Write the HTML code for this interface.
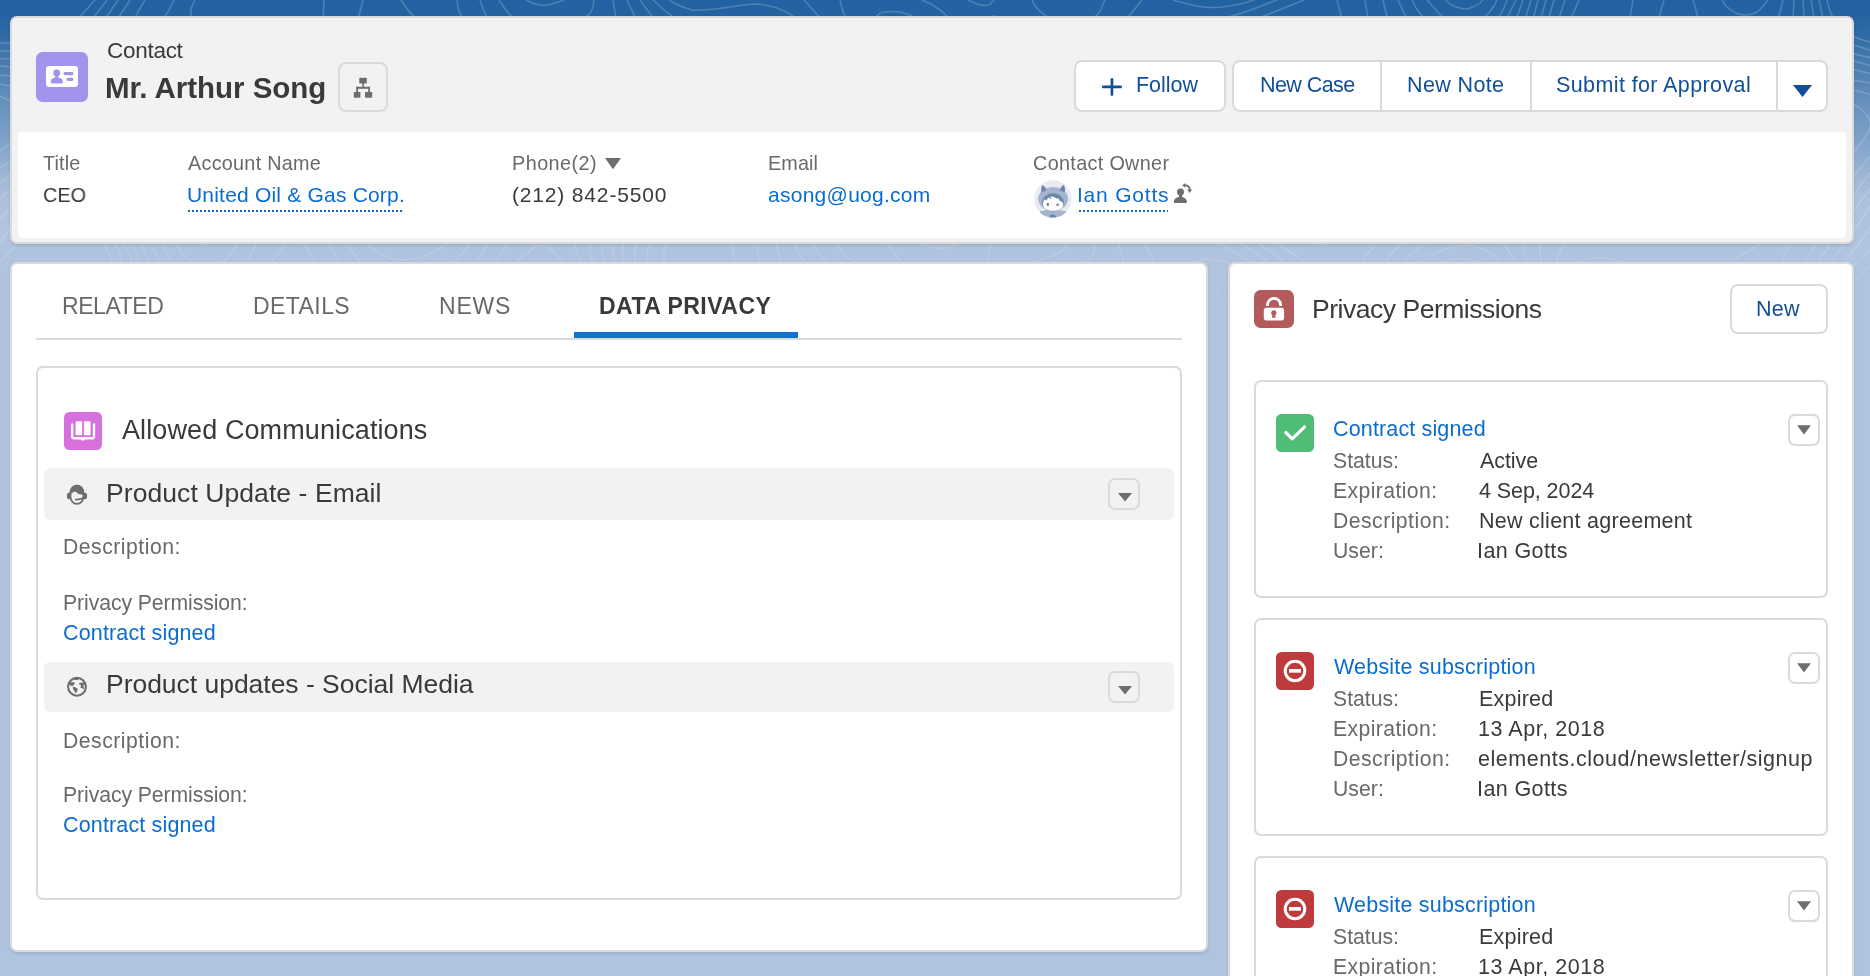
<!DOCTYPE html>
<html><head><meta charset="utf-8"><title>Contact - Mr. Arthur Song</title>
<style>
html,body{margin:0;padding:0}
body{width:1870px;height:976px;overflow:hidden;position:relative;font-family:"Liberation Sans",sans-serif;
background:linear-gradient(180deg,#2362a2 0px,#2463a2 15px,#2f6ba6 35px,#3d74aa 50px,#4679ad 60px,#6490bc 100px,#86a7cd 150px,#a2b8d7 180px,#adc1dd 200px,#b0c4df 225px,#b0c4df 976px)}
.t{position:absolute;white-space:nowrap;line-height:1;will-change:transform}
</style></head><body>
<svg style="position:absolute;left:0;top:0" width="1870" height="330" viewBox="0 0 1870 330"><defs><linearGradient id="tf" x1="0" y1="0" x2="0" y2="1"><stop offset="0" stop-color="#fff" stop-opacity="1"/><stop offset="0.75" stop-color="#fff" stop-opacity="0.8"/><stop offset="1" stop-color="#fff" stop-opacity="0"/></linearGradient><mask id="tm"><rect width="1870" height="330" fill="url(#tf)"/></mask></defs><path d="M1445 0L1450 4Q1455 7 1460 8Q1464 10 1470 8Q1476 6 1480 3L1483 0M1485 333L1488 326Q1490 318 1489 310Q1488 303 1483 297Q1478 291 1471 289Q1464 286 1456 288Q1449 290 1444 297Q1438 303 1437 310Q1436 318 1439 326L1442 333M1427 0L1435 9Q1443 18 1448 21Q1454 24 1459 25Q1464 26 1468 26Q1473 25 1478 23Q1482 20 1486 16Q1491 11 1494 6L1497 0M704 291L709 290Q715 288 720 285Q725 282 729 274Q734 267 734 260Q734 252 731 232Q729 213 727 208Q726 204 725 203Q723 202 717 204Q711 207 694 218Q678 230 673 235Q668 240 666 246Q663 252 664 260Q666 267 670 274Q675 280 681 285Q687 289 695 290L704 291M1499 333L1500 322Q1502 312 1499 302Q1496 291 1489 284Q1482 277 1473 274Q1464 271 1454 274Q1443 277 1435 284Q1428 291 1424 302Q1421 312 1423 322L1425 333M1234 300L1236 297Q1239 294 1238 290Q1236 287 1232 285Q1227 283 1223 284Q1219 285 1218 288Q1217 291 1218 294Q1220 297 1223 299Q1227 301 1230 300L1234 300M1412 0L1416 8Q1421 15 1427 22Q1434 29 1443 34Q1452 40 1460 41Q1467 43 1473 41Q1479 39 1484 36Q1488 32 1494 24Q1500 16 1504 8L1507 0M924 87L928 83Q933 79 936 71Q938 63 939 56Q939 48 936 40Q933 33 929 28Q924 22 916 18Q909 14 900 12Q891 11 885 12Q879 13 877 16Q874 18 874 22Q873 27 878 38Q882 49 894 64Q906 79 910 82Q915 85 919 86L924 87M716 306L733 299Q750 291 753 288Q757 285 759 280Q761 276 758 250Q755 225 758 196Q762 168 759 160Q757 153 752 150Q747 147 741 148Q735 150 729 155Q723 160 708 178Q693 196 674 214Q656 231 652 240Q647 249 647 255Q648 261 650 267Q652 273 656 279Q660 285 666 291Q672 297 682 302Q693 307 705 307L716 306M1169 216L1172 213Q1174 210 1177 205Q1179 199 1181 185Q1182 171 1179 162Q1176 152 1173 150Q1170 147 1166 146Q1161 145 1156 147Q1152 150 1148 155Q1143 160 1140 167Q1137 174 1137 182Q1136 189 1138 196Q1140 202 1144 208Q1149 213 1155 215Q1161 218 1165 217L1169 216M936 180L936 176Q936 171 933 169Q930 168 929 172Q928 177 929 179Q930 181 933 180L936 180M1242 318L1248 315Q1254 311 1258 306Q1262 300 1261 294Q1261 288 1258 284Q1256 279 1249 274Q1242 268 1233 265Q1224 261 1215 260Q1206 258 1200 260Q1194 262 1191 266Q1188 270 1188 276Q1187 282 1188 288Q1189 294 1193 300Q1197 306 1201 310Q1206 314 1212 317Q1218 319 1224 320Q1230 320 1236 319L1242 318M1508 333L1510 320Q1511 306 1507 294Q1503 282 1499 276Q1494 271 1490 267Q1485 264 1474 261Q1464 258 1456 259Q1449 260 1443 263Q1437 265 1428 274Q1418 282 1415 288Q1412 294 1410 300Q1409 306 1409 314Q1408 321 1410 327L1411 333M840 0L842 8Q844 15 849 26Q854 36 873 66Q893 96 897 105Q901 114 903 123Q904 132 902 152Q900 171 902 180Q904 189 911 198Q918 207 922 210Q927 212 932 213Q936 213 940 213Q945 212 950 208Q954 205 957 200Q960 195 961 190Q962 186 962 178Q961 171 956 153Q951 135 950 126Q949 117 954 81Q959 45 958 38Q956 30 953 24Q949 18 944 13Q939 9 931 4L922 0M1032 0L1034 4Q1037 9 1042 13Q1047 17 1053 20Q1059 23 1066 24Q1074 25 1080 24Q1086 22 1090 20Q1094 18 1098 14Q1102 9 1103 4L1105 0M1398 0L1402 9Q1406 18 1412 26Q1419 35 1446 55Q1473 76 1476 74Q1479 71 1488 56Q1497 40 1506 20L1516 0M1518 165L1522 163Q1527 161 1530 157Q1533 153 1534 148Q1534 144 1532 140Q1531 135 1520 122Q1509 109 1492 95Q1476 82 1473 87Q1470 91 1467 101Q1464 111 1464 117Q1464 123 1467 130Q1469 138 1474 145Q1479 152 1485 157Q1491 162 1497 164Q1503 166 1510 165L1518 165M708 321L746 313Q783 304 788 301Q794 297 793 291Q793 285 785 268Q778 252 775 242Q773 231 773 222Q773 213 776 192Q779 171 779 160Q778 150 774 141Q770 132 763 128Q756 123 748 124Q741 126 734 131Q726 137 705 163Q684 189 664 208Q644 228 639 237Q635 246 635 252Q634 258 636 264Q638 270 642 278Q647 285 653 293Q660 301 666 306Q672 311 678 315Q684 318 696 320L708 321M1242 330L1251 326Q1260 322 1266 317Q1271 312 1274 306Q1276 300 1275 292Q1274 285 1271 279Q1267 273 1262 269Q1257 265 1236 253Q1215 242 1209 237Q1202 231 1199 224Q1196 216 1196 192Q1195 168 1192 156Q1189 144 1185 139Q1182 133 1178 130Q1173 126 1168 125Q1164 124 1160 125Q1155 126 1147 133Q1138 141 1131 154Q1124 168 1121 180Q1119 192 1122 202Q1124 213 1138 234Q1153 255 1160 276Q1167 297 1174 306Q1180 315 1187 320Q1194 325 1202 328Q1209 331 1216 332Q1224 333 1233 331L1242 330M1517 333L1518 318Q1520 303 1515 290Q1511 276 1507 270Q1503 264 1497 258Q1491 252 1485 250Q1479 247 1473 246Q1467 245 1460 246Q1452 247 1443 250Q1434 253 1428 257Q1422 261 1416 267Q1410 273 1406 279Q1402 285 1400 292Q1397 300 1396 308Q1395 315 1396 324L1397 333M1105 333L1103 327Q1102 321 1098 317Q1095 313 1089 310Q1083 308 1076 307Q1068 306 1060 307Q1053 308 1047 311Q1041 315 1037 319Q1033 324 1032 328L1031 333M914 333L901 330Q888 326 873 325Q858 323 850 325Q843 326 841 330L840 333M804 0L814 11Q825 22 846 53Q867 85 873 95Q878 105 881 117Q884 129 884 152Q883 174 887 186Q891 198 895 204Q900 211 906 216Q912 222 918 225Q924 228 930 230Q936 231 942 230Q948 229 954 226Q960 222 964 217Q969 212 972 205Q975 198 975 188Q976 177 971 154Q966 132 965 120Q965 108 970 83Q975 58 980 43Q984 28 987 22Q990 16 994 16Q999 17 1026 28Q1053 39 1062 41Q1071 43 1080 43Q1089 43 1096 41Q1104 40 1110 36Q1116 32 1129 16L1142 0M994 0L990 4Q987 7 977 4L968 0M1173 0L1184 3Q1194 6 1203 7Q1212 8 1222 7Q1233 6 1244 3L1254 0M1383 0L1385 9Q1387 18 1391 26Q1395 33 1413 56Q1431 78 1433 84Q1435 90 1437 106Q1440 123 1445 135Q1451 147 1465 164Q1479 181 1485 185Q1491 188 1497 189Q1503 191 1514 189Q1524 187 1536 182Q1548 177 1554 172Q1560 168 1562 164Q1564 159 1562 152Q1559 144 1537 118Q1515 93 1510 82Q1504 72 1505 62Q1505 51 1514 26L1523 0M961 333L944 327Q928 321 889 310Q851 300 841 295Q831 290 822 281Q812 273 804 261Q796 249 792 238Q789 228 789 219Q789 210 792 188Q796 165 794 150Q792 135 789 129Q786 122 782 117Q777 111 772 109Q768 106 762 105Q756 104 748 106Q741 108 734 113Q726 119 703 149Q680 180 657 202Q633 225 628 234Q624 243 623 249Q623 255 624 261Q626 267 634 280Q642 294 656 308Q669 323 680 328L691 333M1261 333L1270 327Q1278 322 1282 316Q1287 310 1289 304Q1290 297 1288 290Q1287 282 1279 273Q1272 264 1250 249Q1227 235 1221 229Q1215 223 1212 215Q1209 207 1206 183Q1204 159 1201 147Q1197 135 1190 124Q1182 113 1178 109Q1173 106 1168 105Q1164 104 1156 106Q1149 108 1143 114Q1137 120 1128 135Q1119 150 1113 165Q1107 180 1106 188Q1105 195 1106 202Q1106 210 1116 237Q1125 264 1125 268Q1125 273 1124 277Q1122 281 1118 283Q1113 286 1089 287Q1065 288 1052 292Q1038 295 1026 302Q1015 309 1005 321L995 333M409 240L416 238Q423 235 429 230Q434 225 436 219Q438 213 436 206Q435 198 428 190Q422 183 413 177Q404 171 395 168Q387 166 380 167Q372 168 369 171Q365 174 363 180Q361 186 361 194Q361 201 363 209Q366 216 370 222Q374 228 379 232Q384 236 390 238Q396 240 403 240L409 240M1524 333L1526 316Q1527 300 1526 291Q1524 282 1521 274Q1518 267 1514 259Q1509 251 1503 244Q1497 237 1491 233Q1485 229 1479 228Q1473 227 1464 229Q1455 231 1443 236Q1431 240 1422 246Q1413 252 1407 258Q1401 263 1396 271Q1391 279 1388 288Q1384 297 1383 306Q1382 315 1382 324L1382 333M713 333L739 329Q765 325 774 326Q783 327 791 330L799 333M1146 333L1150 332Q1155 331 1160 332L1165 333M669 0L676 4Q684 8 692 10Q699 11 723 8Q747 4 758 4Q768 5 777 8Q786 11 793 16Q800 21 808 31Q816 40 838 74Q859 108 862 118Q864 129 864 152Q864 174 869 188Q875 201 882 210Q888 219 897 227Q906 235 915 241Q924 246 932 247Q939 249 946 248Q954 246 960 243Q966 239 972 232Q978 225 982 216Q986 207 987 195Q988 183 983 159Q978 135 977 122Q977 108 981 92Q985 75 988 69Q991 63 995 58Q999 53 1004 51Q1009 48 1016 48Q1023 47 1054 54Q1086 60 1113 62Q1140 63 1149 51Q1159 39 1164 35Q1170 31 1203 23Q1236 16 1256 8L1277 0M1365 0L1369 25Q1374 49 1386 79Q1397 108 1404 118Q1410 129 1428 152Q1446 174 1449 180Q1452 186 1454 192Q1455 198 1453 202Q1451 207 1449 210Q1446 213 1425 227Q1404 240 1394 251Q1385 261 1380 270Q1375 279 1372 288Q1369 297 1367 315L1365 333M1532 333L1533 322Q1535 312 1535 303Q1535 294 1533 284Q1531 273 1525 254Q1519 234 1520 226Q1520 219 1524 214Q1528 210 1535 206Q1542 202 1568 194Q1595 186 1598 183Q1601 180 1603 176Q1604 171 1603 165Q1601 159 1598 154Q1595 150 1570 130Q1545 111 1537 102Q1529 93 1524 86Q1519 78 1518 72Q1516 66 1516 58Q1516 51 1523 26L1531 0M1282 333L1289 327Q1297 321 1300 315Q1304 309 1305 303Q1305 297 1303 290Q1301 282 1293 272Q1285 261 1262 246Q1239 231 1233 225Q1227 219 1223 210Q1219 201 1214 171Q1209 141 1203 126Q1197 111 1186 97Q1176 83 1170 79Q1164 74 1156 72Q1149 69 1146 70Q1143 72 1142 74Q1140 76 1117 128Q1094 180 1092 192Q1091 204 1093 225Q1096 246 1094 252Q1092 258 1084 263Q1077 268 1052 275Q1026 283 1002 293Q978 304 970 305Q963 307 945 305Q927 303 902 298Q876 292 862 287Q849 281 838 273Q828 265 821 256Q813 246 810 237Q807 228 807 219Q807 210 810 194Q814 177 815 168Q815 159 814 147Q812 135 807 123Q803 111 797 104Q792 96 783 92Q775 87 766 86Q756 85 747 88Q738 91 728 101Q717 111 696 143Q675 174 651 196Q626 219 620 230Q613 240 613 249Q613 258 616 267Q620 276 631 292Q642 308 654 320L665 333M1829 150L1832 147Q1836 144 1838 139Q1840 135 1840 132Q1840 129 1838 127Q1836 125 1832 125Q1827 126 1824 131Q1821 135 1821 142Q1821 148 1822 149Q1824 151 1826 150L1829 150M422 258L433 252Q444 247 451 239Q457 231 459 222Q461 213 459 204Q456 195 452 189Q448 183 442 177Q435 171 417 159Q399 146 388 143Q378 139 369 141Q360 143 353 149Q346 156 344 165Q341 174 342 186Q343 198 349 212Q354 227 361 236Q368 246 376 251Q384 257 393 259Q402 261 412 259L422 258M212 243L217 238Q222 234 225 225Q228 216 227 207Q226 198 222 190Q218 183 209 174Q201 166 190 160Q180 153 170 150Q159 147 152 148Q144 149 142 152Q139 156 141 164Q143 171 158 196Q174 221 180 228Q186 236 190 239Q195 243 200 244Q204 245 208 244L212 243M653 0L663 9Q672 17 682 22Q693 26 702 27Q711 27 729 25Q747 22 756 23Q765 24 772 29Q779 33 783 40Q786 48 784 52Q781 57 763 62Q744 67 738 70Q732 74 728 78Q723 82 697 123Q672 165 663 175Q654 184 636 200Q617 216 611 225Q604 234 603 243Q601 252 604 261Q606 270 613 280Q619 291 635 312L651 333M1337 0L1341 15Q1345 30 1350 68Q1354 105 1359 120Q1363 135 1370 145Q1377 155 1395 165Q1413 176 1416 180Q1418 183 1419 188Q1421 192 1418 198Q1416 204 1398 220Q1380 235 1365 258Q1350 281 1344 287Q1338 292 1334 290Q1329 288 1320 277Q1310 267 1303 261Q1296 255 1272 240Q1248 225 1241 218Q1234 210 1231 201Q1227 192 1222 164Q1216 135 1206 102Q1195 69 1196 60Q1198 51 1204 45Q1210 39 1222 33Q1233 28 1269 14L1304 0M1539 333L1542 316Q1544 300 1542 273Q1539 246 1541 238Q1543 231 1547 226Q1551 222 1557 219Q1563 216 1590 214Q1617 211 1621 206Q1626 201 1627 194Q1628 186 1626 172Q1625 159 1620 150Q1615 141 1610 137Q1605 133 1590 126Q1575 119 1566 113Q1557 108 1549 100Q1541 93 1536 85Q1530 77 1528 70Q1525 63 1525 56Q1525 48 1532 24L1538 0M1011 267L1002 267Q993 266 991 265Q989 264 988 261Q986 258 993 237Q1000 216 1002 207Q1003 198 1002 189Q1001 180 994 154Q988 129 988 118Q988 108 990 99Q993 90 999 81Q1005 71 1010 69Q1014 66 1018 65Q1023 64 1035 65Q1047 66 1066 71Q1086 76 1095 82Q1104 88 1106 92Q1108 96 1109 102Q1109 108 1106 120Q1103 132 1089 162Q1076 192 1074 216Q1071 240 1068 244Q1065 249 1059 253Q1053 256 1032 262L1011 267M424 279L436 274Q447 268 457 259Q467 249 473 238Q478 228 479 218Q480 207 477 200Q475 192 471 186Q467 180 443 156Q419 132 414 124Q409 117 402 102Q396 87 392 86Q387 85 368 100Q348 115 338 125Q329 135 325 144Q321 153 321 165Q321 177 324 189Q328 201 333 214Q339 228 345 239Q351 250 357 258Q363 265 369 270Q375 275 382 278Q390 281 399 281Q408 282 416 280L424 279M1812 192L1817 190Q1821 189 1827 184Q1833 179 1850 157Q1868 135 1869 130Q1871 126 1870 122Q1870 117 1863 111Q1857 105 1849 103Q1842 100 1834 100Q1827 100 1821 103Q1815 106 1811 112Q1807 117 1804 129Q1800 141 1800 154Q1800 168 1801 177Q1803 186 1805 188Q1806 190 1809 191L1812 192M213 267L219 264Q225 261 229 256Q233 252 239 240Q245 228 246 220Q247 213 246 206Q246 198 240 186Q235 174 228 167Q222 160 214 154Q205 147 182 134Q159 122 144 118Q129 114 123 115Q117 115 112 118Q106 120 103 124Q100 129 102 136Q104 144 128 177Q152 210 166 231Q180 252 188 259Q195 266 200 267Q204 268 209 268L213 267M894 274L888 273Q882 273 874 271Q867 269 860 265Q852 261 847 257Q842 252 838 246Q833 240 832 234Q830 228 831 223Q831 219 834 214Q837 209 842 208Q846 207 850 210Q855 212 872 229Q890 246 896 255Q903 264 902 267Q902 270 898 272L894 274M1311 333L1319 330Q1326 328 1331 330L1335 333M363 0L355 30Q348 60 344 69Q341 78 336 87Q330 95 313 115Q296 135 291 144Q287 153 286 159Q284 165 286 170Q287 174 302 197Q318 220 334 253Q350 285 356 300Q362 315 363 324L363 333M400 333L401 330Q402 327 404 324Q407 321 426 309Q444 297 458 283Q471 269 481 255Q492 240 495 228Q498 216 496 207Q495 198 491 189Q487 180 470 159Q454 138 450 130Q446 123 445 116Q444 108 447 90Q450 72 447 63Q445 54 440 46Q435 38 422 25Q409 12 405 6L401 0M640 0L651 15Q663 29 680 42Q698 54 700 57Q702 60 703 64Q703 69 702 78Q700 87 695 100Q691 114 681 134Q671 153 661 165Q651 177 626 198Q601 219 597 225Q593 231 591 236Q590 240 590 248Q590 255 593 262Q595 270 617 302L638 333M1547 333L1550 320Q1553 306 1554 282Q1556 258 1560 251Q1563 244 1568 241Q1572 238 1578 236Q1584 235 1612 238Q1641 240 1645 239Q1648 237 1650 232Q1652 228 1645 191Q1638 154 1634 142Q1629 131 1623 125Q1616 120 1599 115Q1581 109 1572 104Q1563 100 1556 93Q1548 87 1543 80Q1538 72 1536 66Q1534 60 1534 52Q1534 45 1540 22L1546 0M1722 0L1726 6Q1731 11 1738 14Q1746 16 1752 14Q1758 13 1763 6L1768 0M1332 243L1324 244Q1317 245 1302 240Q1287 235 1274 228Q1260 221 1253 214Q1245 207 1241 197Q1236 186 1232 164Q1227 141 1221 117Q1214 93 1214 80Q1213 66 1215 62Q1217 57 1220 52Q1224 48 1235 40Q1247 33 1266 27Q1284 21 1293 20Q1302 19 1308 21Q1314 22 1318 27Q1323 32 1326 40Q1328 48 1339 124Q1350 201 1347 214Q1345 228 1342 232Q1339 237 1336 240L1332 243M1038 214L1036 214Q1035 214 1034 212Q1032 210 1020 186Q1008 161 1004 151Q1001 141 1000 132Q998 123 999 114Q1001 105 1005 98Q1008 90 1014 85Q1020 81 1028 79Q1035 78 1046 79Q1056 81 1067 86Q1078 90 1083 96Q1089 101 1091 108Q1092 114 1091 123Q1090 132 1086 141Q1082 150 1060 182L1038 214M0 151L12 142Q24 133 32 130Q39 127 45 128Q51 129 60 134Q69 140 84 152Q99 164 114 180Q129 195 141 212Q153 228 167 253Q180 278 184 283Q189 288 194 290Q198 291 204 291Q210 290 216 288Q222 286 229 281Q236 276 241 270Q246 264 254 249Q262 234 267 213Q272 192 272 183Q272 174 267 168Q262 162 204 124Q147 87 140 86Q132 85 124 86Q117 87 81 100Q45 113 39 112Q33 111 16 104L0 96M1872 95L1858 91Q1845 88 1834 87Q1824 86 1816 89Q1809 91 1804 97Q1800 102 1796 115Q1791 129 1788 165Q1784 201 1780 214Q1777 228 1772 234Q1767 241 1747 252Q1726 264 1721 270Q1716 276 1715 286Q1714 297 1717 315L1720 333M1769 333L1775 298Q1781 264 1784 255Q1787 246 1806 229Q1824 211 1848 183L1872 154M174 0L170 8Q167 15 154 30Q141 45 132 52Q123 60 111 67Q99 74 86 79Q72 84 60 87Q48 89 38 89Q27 89 14 87L0 84M324 0L323 24Q321 48 317 60Q313 72 308 78Q303 84 297 88Q291 93 284 96Q276 100 268 101Q261 103 255 102Q249 101 242 98Q234 94 228 89Q222 84 216 77Q210 70 204 58Q198 46 194 35Q191 24 191 16Q190 9 193 4L195 0M457 333L458 326Q460 318 463 310Q467 303 487 274Q507 246 511 236Q515 225 515 219Q516 213 513 204Q511 195 497 164Q483 132 483 126Q482 120 483 116Q485 111 488 107Q492 102 496 101Q501 99 520 103Q538 108 551 107Q564 106 574 100Q585 95 588 91Q592 87 593 82Q595 78 594 75Q594 72 592 69Q589 66 580 62Q570 59 558 59Q546 59 528 63Q510 67 504 66Q498 65 492 60Q486 55 478 44Q469 33 465 24Q460 15 458 8L457 0M627 0L637 21Q648 41 662 57Q676 72 678 76Q680 81 681 87Q681 93 678 110Q675 126 667 141Q658 156 649 166Q639 177 614 196Q589 216 584 222Q579 228 577 232Q576 237 575 243Q575 249 579 258Q582 267 604 300L625 333M1872 83L1846 79Q1821 74 1814 74Q1806 75 1802 77Q1797 80 1794 84Q1791 88 1789 95Q1786 102 1781 141Q1775 180 1770 195Q1765 210 1758 217Q1752 225 1744 230Q1737 234 1728 237Q1719 239 1710 239Q1701 238 1690 232Q1680 226 1672 215Q1664 204 1659 190Q1654 177 1649 150Q1644 124 1640 116Q1636 108 1631 105Q1626 103 1610 101Q1593 100 1586 98Q1578 96 1569 90Q1560 85 1555 78Q1549 72 1547 66Q1544 60 1544 52Q1543 45 1544 36Q1546 27 1550 14L1554 0M1693 0L1696 10Q1698 20 1702 25Q1706 30 1716 33Q1725 37 1737 38Q1749 40 1756 38Q1764 37 1768 33Q1773 30 1776 24Q1779 17 1781 9L1783 0M1299 219L1293 219Q1287 218 1280 216Q1272 213 1266 209Q1260 205 1256 200Q1252 195 1248 184Q1244 174 1235 134Q1226 93 1227 82Q1227 72 1232 64Q1236 55 1245 49Q1254 42 1266 39Q1278 35 1287 35Q1296 36 1302 41Q1308 45 1311 52Q1314 60 1317 75Q1319 90 1322 120Q1324 150 1323 170Q1323 189 1321 195Q1320 201 1317 206Q1314 211 1311 214Q1308 216 1304 218L1299 219M1044 165L1038 164Q1032 163 1028 160Q1023 156 1019 150Q1016 144 1014 136Q1012 129 1012 123Q1012 117 1015 111Q1017 105 1021 101Q1026 97 1030 95Q1035 94 1042 94Q1050 95 1056 97Q1062 100 1067 104Q1071 108 1073 114Q1075 120 1075 126Q1074 132 1070 140Q1067 147 1061 153Q1056 159 1050 162L1044 165M0 168L12 160Q24 153 30 151Q36 150 44 151Q51 151 64 157Q78 163 94 176Q111 189 124 204Q137 219 146 234Q154 249 161 268Q167 288 171 310L174 333M1784 333L1788 310Q1792 288 1797 276Q1801 264 1837 217L1872 170M198 333L222 314Q246 295 253 287Q260 279 271 263Q282 247 285 245Q288 242 291 241Q294 240 297 241Q300 241 304 245Q308 249 314 261Q320 273 322 285Q325 297 324 315L324 333M1555 333L1564 302Q1572 271 1576 266Q1581 261 1588 259Q1596 257 1604 258Q1611 259 1622 262Q1632 266 1650 275Q1669 285 1676 294Q1684 303 1688 318L1693 333M145 0L139 10Q134 21 127 30Q120 39 113 46Q105 53 96 59Q87 64 76 68Q66 73 56 75Q45 77 34 77Q24 78 12 76L0 75M613 0L615 12Q617 24 616 27Q615 30 612 34Q609 37 602 39Q594 40 564 41Q534 41 524 40Q513 39 506 35Q498 31 492 24Q486 17 483 9L480 0M1664 0L1660 14Q1657 27 1647 46Q1636 66 1627 73Q1617 81 1606 83Q1596 86 1590 85Q1584 85 1578 82Q1572 80 1567 76Q1563 72 1559 66Q1555 60 1554 54Q1553 48 1553 42Q1553 36 1559 18L1565 0M1872 74L1846 68Q1821 62 1810 56Q1799 51 1796 44Q1793 36 1793 18L1794 0M1284 195L1276 192Q1269 189 1264 183Q1260 177 1252 153Q1245 129 1242 113Q1239 96 1240 87Q1241 78 1244 72Q1247 66 1253 60Q1260 55 1268 53Q1275 51 1282 52Q1288 54 1293 60Q1298 66 1301 75Q1304 84 1305 100Q1307 117 1307 134Q1307 150 1305 162Q1304 174 1300 182Q1296 189 1290 192L1284 195M1725 222L1718 223Q1710 223 1704 221Q1698 219 1692 216Q1686 212 1681 206Q1676 201 1672 194Q1668 186 1665 179Q1663 171 1661 148Q1658 126 1661 111Q1663 96 1666 90Q1669 84 1673 80Q1677 75 1687 68Q1698 62 1713 60Q1728 57 1740 59Q1752 60 1760 63Q1767 67 1770 72Q1773 78 1774 90Q1774 102 1773 129Q1771 156 1767 172Q1763 189 1756 200Q1749 210 1743 214Q1737 218 1731 220L1725 222M555 219L552 219Q549 219 546 217Q543 215 535 201Q527 186 523 172Q520 159 520 154Q520 150 523 146Q525 141 531 137Q537 133 562 124Q588 114 610 100Q633 85 639 85Q645 84 650 86Q654 88 658 95Q663 102 663 110Q664 117 661 126Q659 135 653 144Q648 154 642 161Q635 168 626 176Q617 183 595 197Q573 211 564 215L555 219M1041 129L1041 127Q1041 125 1042 125Q1044 125 1042 127L1041 129M0 183L6 178Q12 173 18 169Q24 166 30 165Q36 164 44 164Q51 165 66 171Q81 177 98 190Q114 204 126 219Q138 234 144 250Q151 267 153 284Q154 300 150 316L146 333M1794 333L1798 315Q1801 297 1805 285Q1810 273 1841 229L1872 186M479 333L481 321Q483 309 490 296Q497 282 510 269Q522 256 528 252Q534 247 538 246Q543 245 548 247Q552 249 556 255Q561 260 579 284Q598 309 604 321L611 333M1566 333L1575 312Q1584 290 1588 286Q1593 283 1599 281Q1605 280 1616 283Q1626 286 1637 293Q1647 300 1653 308Q1659 315 1661 324L1663 333M130 0L119 17Q108 34 100 40Q93 47 86 52Q78 56 60 62Q42 67 32 68Q21 68 10 67L0 66M594 0L593 6Q592 12 588 15Q585 18 578 21Q570 23 558 24Q546 25 537 24Q528 24 522 21Q516 19 511 16Q507 12 503 6L499 0M1633 0L1631 12Q1629 24 1623 38Q1617 51 1611 57Q1605 64 1598 66Q1590 69 1582 66Q1574 63 1570 56Q1566 48 1567 38Q1568 27 1573 14L1579 0M1872 66L1854 61Q1836 56 1826 50Q1815 45 1812 40Q1808 36 1807 32Q1805 27 1804 14L1803 0M1719 210L1713 210Q1707 209 1702 207Q1698 205 1693 202Q1688 198 1684 193Q1680 187 1675 175Q1671 162 1670 147Q1670 132 1673 120Q1677 107 1684 98Q1692 88 1702 82Q1713 77 1724 76Q1734 75 1742 77Q1749 80 1754 87Q1759 93 1762 105Q1764 117 1764 134Q1764 150 1761 162Q1759 174 1754 184Q1749 193 1743 199Q1737 204 1728 207L1719 210M1281 144L1278 145Q1275 146 1272 143Q1269 140 1266 135Q1263 129 1260 120Q1258 111 1258 100Q1258 90 1261 86Q1263 81 1266 79Q1269 78 1272 78Q1275 78 1278 81Q1281 83 1284 91Q1287 99 1287 113Q1287 128 1284 136L1281 144M576 190L568 190Q561 190 555 185Q549 180 547 172Q546 165 549 159Q551 153 560 147Q569 141 592 130Q615 120 622 118Q630 116 634 118Q639 119 641 123Q642 126 642 130Q642 135 636 146Q630 157 617 167Q605 177 590 183L576 190M0 199L5 194Q9 189 15 185Q21 181 27 179Q33 176 40 176Q48 176 56 178Q63 179 70 183Q78 186 94 199Q111 212 122 226Q132 240 137 255Q142 270 142 285Q142 300 137 316L132 333M1803 333L1805 320Q1807 306 1812 294Q1816 282 1834 258Q1852 234 1862 219L1872 203M498 333L498 324Q498 315 502 304Q507 294 514 286Q522 279 526 276Q531 274 536 273Q540 273 548 276Q555 279 562 286Q570 293 578 304Q586 315 590 324L594 333M1581 333L1587 324Q1593 315 1596 313Q1599 311 1604 310Q1608 309 1616 312Q1623 316 1626 320Q1629 324 1631 328L1632 333M118 0L108 15Q97 30 84 39Q72 48 55 53Q39 58 20 58L0 59M564 0L555 3Q546 6 540 5Q534 4 530 2L526 0M1872 58L1858 55Q1845 51 1835 45Q1825 39 1820 32Q1815 24 1813 12L1811 0M1728 196L1719 196Q1710 197 1702 193Q1695 189 1689 180Q1683 171 1681 160Q1679 150 1681 138Q1682 126 1687 117Q1692 109 1700 102Q1707 96 1716 94Q1725 91 1731 92Q1737 93 1742 98Q1747 102 1750 110Q1754 117 1755 126Q1756 135 1755 146Q1754 156 1752 165Q1749 174 1744 181Q1740 188 1734 192L1728 196M0 220L9 208Q18 197 24 193Q30 190 36 189Q42 187 50 188Q57 188 64 191Q72 194 87 204Q102 214 112 227Q123 240 126 248Q130 255 132 262Q133 270 133 285Q132 300 126 316L120 333M1811 333L1813 321Q1815 309 1820 298Q1824 287 1842 265Q1860 243 1866 234L1872 225M523 333L521 327Q518 321 520 315Q521 309 525 304Q529 300 534 298Q540 296 546 298Q551 300 556 304Q561 309 564 315Q567 321 567 327L566 333M107 0L97 13Q87 25 75 34Q63 42 48 46Q33 51 16 51L0 51M1872 51L1860 47Q1848 44 1840 38Q1832 33 1827 26Q1822 18 1821 9L1819 0M1725 183L1719 184Q1713 184 1707 181Q1701 178 1697 171Q1693 165 1691 158Q1690 150 1691 142Q1692 135 1695 129Q1698 123 1704 117Q1710 112 1716 110Q1722 108 1726 109Q1731 110 1735 114Q1739 117 1741 122Q1743 126 1745 134Q1746 141 1745 148Q1744 156 1742 162Q1740 168 1737 173Q1734 177 1730 180L1725 183M0 243L10 228Q21 212 26 208Q30 205 34 203Q39 201 45 200Q51 199 57 200Q63 201 70 205Q78 208 86 213Q93 218 104 230Q114 242 117 248Q121 255 122 262Q124 270 123 285Q122 300 116 316L109 333M1819 333L1821 322Q1822 312 1827 302Q1832 291 1837 284Q1842 277 1857 262L1872 247M95 0L86 10Q77 21 66 28Q54 36 40 39Q27 43 14 43L0 43M1872 43L1863 40Q1854 38 1846 33Q1839 28 1835 21Q1831 15 1829 8L1827 0M1719 165L1714 164Q1710 162 1708 156Q1705 150 1708 143Q1710 136 1714 133Q1719 131 1724 133Q1728 135 1730 141Q1731 147 1730 153Q1728 159 1723 162L1719 165M0 262L6 256Q13 249 22 237Q30 225 36 220Q42 216 46 215Q51 214 57 214Q63 214 75 220Q87 226 96 236Q106 246 108 252Q111 258 113 266Q115 273 113 288Q111 303 104 318L97 333M1827 333L1829 324Q1830 315 1834 306Q1838 297 1845 289Q1851 282 1862 273L1872 265" fill="none" stroke="#fff" stroke-opacity="0.2" stroke-width="1.5" mask="url(#tm)"/></svg>
<div style="position:absolute;left:10px;top:16px;width:1844px;height:228px;background:#f3f2f2;border:2px solid #dcdad8;box-sizing:border-box;border-radius:7px;box-shadow:0 2px 3px rgba(0,0,0,.10)"></div>
<div style="position:absolute;left:18px;top:132px;width:1828px;height:106px;background:#fff;border-radius:0 0 5px 5px"></div>
<svg style="position:absolute;left:36px;top:52px" width="52" height="50" viewBox="0 0 52 50"><rect width="52" height="50" rx="6.5" fill="#a094ed"/><rect x="10" y="14" width="32" height="21" rx="3" fill="#fff"/><circle cx="20.7" cy="21" r="3.4" fill="#a094ed"/><rect x="19.2" y="23" width="3" height="3.2" fill="#a094ed"/><path d="M14.8 29.6 C14.8 26.6 17.5 25.6 20.8 25.6 C24.1 25.6 26.9 26.6 26.9 29.6 L26.9 30.2 C26.9 31.0 26.4 31.4 25.6 31.4 L16.1 31.4 C15.3 31.4 14.8 31.0 14.8 30.2 Z" fill="#a094ed"/><rect x="27.6" y="19.9" width="9.8" height="3.3" rx="1.4" fill="#a094ed"/><rect x="30.5" y="25.7" width="6.9" height="3.2" rx="1.4" fill="#a094ed"/></svg>
<div class="t" style="left:106.71px;top:40px;font-size:22.5px;letter-spacing:-0.281px;color:#3a3a38;">Contact</div>
<div class="t" style="left:105.03px;top:73px;font-size:29.5px;letter-spacing:-0.033px;color:#3a3a38;font-weight:700;">Mr. Arthur Song</div>
<div style="position:absolute;left:338px;top:62px;width:50px;height:50px;border:2px solid #dcdad8;box-sizing:border-box;border-radius:8px"></div>
<svg style="position:absolute;left:338px;top:62px" width="50" height="50" viewBox="0 0 50 50"><g fill="#706e6b"><rect x="21.3" y="15.8" width="7.5" height="5.6" rx=".6"/><rect x="15.8" y="29.9" width="6.6" height="5.8" rx=".6"/><rect x="27" y="29.9" width="7.2" height="5.8" rx=".6"/><rect x="24.3" y="21" width="1.6" height="4.5"/><rect x="18.2" y="24.8" width="13.8" height="2"/><rect x="18.2" y="24.8" width="1.8" height="5.5"/><rect x="30.2" y="24.8" width="1.8" height="5.5"/></g></svg>
<div style="position:absolute;left:1074px;top:60px;width:152px;height:52px;background:#fff;border:2px solid #dcdad8;box-sizing:border-box;border-radius:8px"></div>
<svg style="position:absolute;left:1100px;top:75px" width="24" height="24" viewBox="0 0 24 24"><g fill="#124f9b"><rect x="1.9" y="10.6" width="20.1" height="2.7" rx="1.3"/><rect x="10.6" y="2.9" width="2.7" height="18" rx="1.3"/></g></svg>
<div class="t" style="left:1135.94px;top:75px;font-size:21.5px;letter-spacing:-0.023px;color:#124f9b;">Follow</div>
<div style="position:absolute;left:1232px;top:60px;width:596px;height:52px;background:#fff;border:2px solid #dcdad8;box-sizing:border-box;border-radius:8px"></div>
<div style="position:absolute;left:1380px;top:60px;width:2px;height:52px;background:#dcdad8"></div>
<div style="position:absolute;left:1530px;top:60px;width:2px;height:52px;background:#dcdad8"></div>
<div style="position:absolute;left:1776px;top:60px;width:2px;height:52px;background:#dcdad8"></div>
<div class="t" style="left:1259.59px;top:75px;font-size:21.5px;letter-spacing:-0.572px;color:#124f9b;">New Case</div>
<div class="t" style="left:1407.14px;top:75px;font-size:21.5px;letter-spacing:0.374px;color:#124f9b;">New Note</div>
<div class="t" style="left:1556.22px;top:75px;font-size:21.5px;letter-spacing:0.395px;color:#124f9b;">Submit for Approval</div>
<svg style="position:absolute;left:1793px;top:85px" width="19" height="12" viewBox="0 0 19 12"><path d="M0 0 L19 0 L9.5 12 Z" fill="#124f9b"/></svg>
<div class="t" style="left:42.81px;top:154px;font-size:19.8px;letter-spacing:0.167px;color:#6b6966;">Title</div>
<div class="t" style="left:187.96px;top:154px;font-size:19.8px;letter-spacing:0.278px;color:#6b6966;">Account Name</div>
<div class="t" style="left:512.28px;top:154px;font-size:19.8px;letter-spacing:0.471px;color:#6b6966;">Phone(2)</div>
<svg style="position:absolute;left:605px;top:158px" width="16" height="11.5" viewBox="0 0 16 11.5"><path d="M0 0 L16 0 L8 11.3 Z" fill="#706e6b"/></svg>
<div class="t" style="left:768.23px;top:154px;font-size:19.8px;letter-spacing:0.122px;color:#6b6966;">Email</div>
<div class="t" style="left:1033.24px;top:154px;font-size:19.8px;letter-spacing:0.340px;color:#6b6966;">Contact Owner</div>
<div class="t" style="left:42.53px;top:184px;font-size:21px;letter-spacing:0.000px;color:#3a3a38;transform:scaleX(0.944);transform-origin:0 0;">CEO</div>
<div class="t" style="left:187.08px;top:184px;font-size:21px;letter-spacing:0.200px;color:#0b6cd0;">United Oil &amp; Gas Corp.</div>
<div style="position:absolute;left:188px;top:209.5px;width:215.5px;height:2px;background-image:linear-gradient(90deg,#0b6cd0 0,#0b6cd0 2px,transparent 2px);background-size:4px 2px"></div>
<div class="t" style="left:511.70px;top:184px;font-size:21px;letter-spacing:0.832px;color:#3a3a38;">(212) 842-5500</div>
<div class="t" style="left:768.26px;top:184px;font-size:21px;letter-spacing:0.266px;color:#0b6cd0;">asong@uog.com</div>
<svg style="position:absolute;left:1034px;top:180px" width="38" height="38" viewBox="0 0 38 38"><defs><clipPath id="av"><circle cx="18.9" cy="18.95" r="18.65"/></clipPath></defs><circle cx="18.9" cy="18.95" r="18.65" fill="#e8ebf0"/><g clip-path="url(#av)"><path d="M4.5 43 L6.1 31.2 C9.5 30.3 14 30 19 30 C24 30 28.5 30.3 31.9 31.2 L33.5 43 Z" fill="#a4b3cf"/><circle cx="18.7" cy="37.9" r="3.5" fill="#6f85a9"/><ellipse cx="19.1" cy="19.1" rx="14.9" ry="12" fill="#a4b3cf"/><path d="M7.4 12.2 C6.8 9.2 7.4 6.6 8.5 5.1 C10.6 6.2 12.1 8.4 12.4 10.6 Z" fill="#6f85a9"/><path d="M30.8 12.2 C31.4 9.2 30.8 6.6 29.7 5.1 C27.6 6.2 26.1 8.4 25.8 10.6 Z" fill="#6f85a9"/><ellipse cx="19.1" cy="22.3" rx="10.9" ry="9" fill="#6f85a9"/><path d="M9.1 24.5 C9.1 22 9.8 20.2 10.8 19.3 L12.5 20.6 L14.2 17.6 L17.5 19.3 L16.2 16.6 C18.5 16.3 21 17 22.6 18.6 L24.8 18.4 L25.2 20.4 L27.6 21.4 C28.6 22.6 29.2 23.5 29.2 24.5 C29.2 28.5 25 30.8 19.1 30.8 C13.2 30.8 9.1 28.5 9.1 24.5 Z" fill="#fff"/><ellipse cx="13.8" cy="24.4" rx="1.25" ry="1.55" fill="#6f85a9"/><ellipse cx="23.6" cy="24.7" rx="1.25" ry="1.55" fill="#6f85a9"/></g></svg>
<div class="t" style="left:1076.66px;top:184px;font-size:21px;letter-spacing:0.786px;color:#0b6cd0;">Ian Gotts</div>
<div style="position:absolute;left:1078.6px;top:209.5px;width:89px;height:2px;background-image:linear-gradient(90deg,#0b6cd0 0,#0b6cd0 2px,transparent 2px);background-size:4px 2px"></div>
<svg style="position:absolute;left:1172px;top:181px" width="22" height="24" viewBox="0 0 22 24"><g fill="#706e6b"><ellipse cx="8.5" cy="10.9" rx="3.5" ry="3.4"/><rect x="6.9" y="13" width="3.2" height="3.5"/><path d="M1.8 20.9 C1.8 17.6 4.6 16 8.35 16 C12.1 16 14.9 17.6 14.9 20.9 C14.9 21.5 14.5 21.9 13.9 21.9 L2.8 21.9 C2.2 21.9 1.8 21.5 1.8 20.9 Z"/><path d="M10.2 4.3 L13.4 1.9 L13.4 6.7 Z"/><path d="M15.3 8.6 L20.1 8.6 L17.7 11.9 Z"/></g><path d="M12.8 4.3 C15.6 4.1 17.6 5.6 17.9 9" stroke="#706e6b" stroke-width="1.8" fill="none"/></svg>
<div style="position:absolute;left:10px;top:262px;width:1198px;height:690px;background:#fff;border:2px solid #dcdad8;box-sizing:border-box;border-radius:7px;box-shadow:0 2px 3px rgba(0,0,0,.10)"></div>
<div class="t" style="left:61.56px;top:295px;font-size:23px;letter-spacing:-0.416px;color:#6b6966;">RELATED</div>
<div class="t" style="left:253.11px;top:295px;font-size:23px;letter-spacing:0.422px;color:#6b6966;">DETAILS</div>
<div class="t" style="left:438.56px;top:295px;font-size:23px;letter-spacing:0.781px;color:#6b6966;">NEWS</div>
<div class="t" style="left:599.31px;top:295px;font-size:23px;letter-spacing:0.482px;color:#3a3a38;font-weight:700;">DATA PRIVACY</div>
<div style="position:absolute;left:36px;top:338px;width:1146px;height:2px;background:#dcdad8"></div>
<div style="position:absolute;left:574px;top:332px;width:224px;height:6px;background:#1271d0"></div>
<div style="position:absolute;left:36px;top:366px;width:1146px;height:534px;border:2px solid #dcdad8;box-sizing:border-box;border-radius:7px"></div>
<svg style="position:absolute;left:64px;top:412px" width="38" height="38" viewBox="0 0 38 38"><rect width="38" height="38" rx="5.5" fill="#d670dd"/><g fill="#fff"><rect x="11.6" y="9.2" width="6.5" height="14" rx=".8"/><rect x="19.9" y="9.2" width="6.6" height="14" rx=".8"/></g><path d="M8.2 12.5 V24.5 C8.2 25.6 8.9 26.3 10 26.3 H28.2 C29.3 26.3 30 25.6 30 24.5 V12.5" stroke="#fff" stroke-width="2.4" fill="none" stroke-linecap="round"/><rect x="17" y="26" width="4" height="2.6" rx=".8" fill="#fff"/></svg>
<div class="t" style="left:122.40px;top:417px;font-size:27px;letter-spacing:0.105px;color:#3a3a38;">Allowed Communications</div>
<div style="position:absolute;left:44px;top:468px;width:1130px;height:52px;background:#f3f2f2;border-radius:6px"></div>
<svg style="position:absolute;left:66px;top:484px" width="22" height="22" viewBox="0 0 22 22"><rect x="4.5" y="1.65" width="12.9" height="18.3" rx="6.45" ry="6.9" stroke="#706e6b" stroke-width="1.75" fill="none"/><path d="M3.7 10.5 C3.7 4.5 6.8 0.8 10.95 0.8 C15.1 0.8 18.2 4.5 18.2 10.5 L18.2 11.2 C17.5 11 16.6 10.8 16.6 10.8 C14.5 10.5 12.8 10.2 11.9 9.5 C10.9 8.8 9.8 7.6 8.9 7.6 C7.8 7.6 6.8 9.2 5.2 9.5 C4.6 9.8 4.1 10.2 3.7 10.7 Z" fill="#706e6b"/><ellipse cx="2.9" cy="12" rx="2" ry="3.2" fill="#706e6b"/><ellipse cx="19.05" cy="12" rx="2" ry="3.2" fill="#706e6b"/><path d="M17.2 13.6 C15.8 15 13 15.5 9.7 15.6" stroke="#706e6b" stroke-width="1.7" fill="none" stroke-linecap="round"/></svg>
<div class="t" style="left:106.03px;top:480px;font-size:26.5px;letter-spacing:0.071px;color:#3a3a38;">Product Update - Email</div>
<div style="position:absolute;left:1108px;top:478px;width:32px;height:32px;border:2px solid #dcdad8;box-sizing:border-box;border-radius:7px"></div>
<svg style="position:absolute;left:1118px;top:493px" width="14" height="9" viewBox="0 0 14 9"><path d="M0 0 L14 0 L7 8.5 Z" fill="#706e6b"/></svg>
<div class="t" style="left:62.71px;top:536px;font-size:21.2px;letter-spacing:0.508px;color:#6b6966;">Description:</div>
<div class="t" style="left:62.96px;top:592px;font-size:21.2px;letter-spacing:-0.078px;color:#6b6966;">Privacy Permission:</div>
<div class="t" style="left:62.91px;top:623px;font-size:21.5px;letter-spacing:0.150px;color:#0b6cd0;">Contract signed</div>
<div style="position:absolute;left:44px;top:662px;width:1130px;height:50px;background:#f3f2f2;border-radius:6px"></div>
<svg style="position:absolute;left:66px;top:676px" width="22" height="22" viewBox="0 0 22 22"><circle cx="11" cy="10.8" r="8.9" stroke="#706e6b" stroke-width="2.1" fill="none"/><path fill="#706e6b" d="M8 2.2 L12.3 2.2 L12 3.9 L8.4 3.9 Z M2.6 6.2 L8.3 6.3 L8.8 7.7 L6.9 9.5 L6.1 10.2 L3.4 8.9 Z M6.8 10.6 L9.8 11.6 L11.8 13.1 L11.1 15.2 L9.8 17.6 L8.3 15.1 L7.1 13.2 Z M13.1 6.9 L19.6 6 L19.6 8.3 L17.3 8.9 L18.2 13.3 L14.4 11.4 L15.1 9 L13.2 8.5 Z"/></svg>
<div class="t" style="left:106.03px;top:671px;font-size:26.5px;letter-spacing:-0.027px;color:#3a3a38;">Product updates - Social Media</div>
<div style="position:absolute;left:1108px;top:671px;width:32px;height:32px;border:2px solid #dcdad8;box-sizing:border-box;border-radius:7px"></div>
<svg style="position:absolute;left:1118px;top:686px" width="14" height="9" viewBox="0 0 14 9"><path d="M0 0 L14 0 L7 8.5 Z" fill="#706e6b"/></svg>
<div class="t" style="left:62.71px;top:730px;font-size:21.2px;letter-spacing:0.508px;color:#6b6966;">Description:</div>
<div class="t" style="left:62.96px;top:784px;font-size:21.2px;letter-spacing:-0.078px;color:#6b6966;">Privacy Permission:</div>
<div class="t" style="left:62.91px;top:815px;font-size:21.5px;letter-spacing:0.150px;color:#0b6cd0;">Contract signed</div>
<div style="position:absolute;left:1228px;top:262px;width:626px;height:760px;background:#fff;border:2px solid #dcdad8;box-sizing:border-box;border-radius:7px;box-shadow:0 2px 3px rgba(0,0,0,.10)"></div>
<svg style="position:absolute;left:1254px;top:290px" width="40" height="38" viewBox="0 0 40 38"><rect width="40" height="38" rx="6.5" fill="#b25b5a"/><path d="M13.5 16.1 V14.9 A6.55 6.55 0 0 1 26.6 14.9 V16.1" stroke="#fff" stroke-width="2.8" fill="none"/><rect x="9.8" y="17.8" width="20.3" height="12.6" rx="2.6" fill="#fff"/><circle cx="19.8" cy="22.8" r="2.6" fill="#b25b5a"/><path d="M18.5 23.5 L21.1 23.5 L21.6 27.8 L18 27.8 Z" fill="#b25b5a"/></svg>
<div class="t" style="left:1312.03px;top:296px;font-size:26.5px;letter-spacing:-0.473px;color:#3a3a38;">Privacy Permissions</div>
<div style="position:absolute;left:1730px;top:284px;width:98px;height:50px;background:#fff;border:2px solid #dcdad8;box-sizing:border-box;border-radius:8px"></div>
<div class="t" style="left:1756.34px;top:299px;font-size:21.5px;letter-spacing:0.275px;color:#124f9b;">New</div>
<div style="position:absolute;left:1254px;top:380px;width:574px;height:218px;border:2px solid #dcdad8;box-sizing:border-box;border-radius:7px"></div>
<svg style="position:absolute;left:1276px;top:414px" width="38" height="38" viewBox="0 0 38 38"><rect width="38" height="38" rx="5.5" fill="#50bd77"/><path d="M9.8 18.5 L16.3 24.8 L28.5 12.8" stroke="#fff" stroke-width="3.2" fill="none" stroke-linecap="round" stroke-linejoin="round"/></svg>
<div style="position:absolute;left:1788px;top:414px;width:32px;height:32px;border:2px solid #dcdad8;box-sizing:border-box;border-radius:7px"></div>
<svg style="position:absolute;left:1797px;top:425px" width="14" height="10" viewBox="0 0 14 10"><path d="M0 0.2 L14 0.2 L7 9.5 Z" fill="#706e6b"/></svg>
<div class="t" style="left:1332.96px;top:419px;font-size:21.5px;letter-spacing:0.146px;color:#0b6cd0;">Contract signed</div>
<div class="t" style="left:1333.04px;top:450px;font-size:21.2px;letter-spacing:0.001px;color:#6b6966;">Status:</div>
<div class="t" style="left:1479.81px;top:451px;font-size:21.5px;letter-spacing:-0.090px;color:#3a3a38;">Active</div>
<div class="t" style="left:1332.96px;top:480px;font-size:21.2px;letter-spacing:0.396px;color:#6b6966;">Expiration:</div>
<div class="t" style="left:1479.36px;top:481px;font-size:21.5px;letter-spacing:-0.074px;color:#3a3a38;">4 Sep, 2024</div>
<div class="t" style="left:1332.96px;top:510px;font-size:21.2px;letter-spacing:0.472px;color:#6b6966;">Description:</div>
<div class="t" style="left:1478.79px;top:511px;font-size:21.5px;letter-spacing:0.265px;color:#3a3a38;">New client agreement</div>
<div class="t" style="left:1333.06px;top:540px;font-size:21.2px;letter-spacing:0.055px;color:#6b6966;">User:</div>
<div class="t" style="left:1477.17px;top:541px;font-size:21.5px;letter-spacing:0.403px;color:#3a3a38;">Ian Gotts</div>
<div style="position:absolute;left:1254px;top:618px;width:574px;height:218px;border:2px solid #dcdad8;box-sizing:border-box;border-radius:7px"></div>
<svg style="position:absolute;left:1276px;top:652px" width="38" height="38" viewBox="0 0 38 38"><rect width="38" height="38" rx="5.5" fill="#bf3a3c"/><circle cx="19" cy="19" r="9.8" stroke="#fff" stroke-width="3" fill="none"/><rect x="13" y="17" width="12" height="3.7" fill="#fff"/></svg>
<div style="position:absolute;left:1788px;top:652px;width:32px;height:32px;border:2px solid #dcdad8;box-sizing:border-box;border-radius:7px"></div>
<svg style="position:absolute;left:1797px;top:663px" width="14" height="10" viewBox="0 0 14 10"><path d="M0 0.2 L14 0.2 L7 9.5 Z" fill="#706e6b"/></svg>
<div class="t" style="left:1333.96px;top:657px;font-size:21.5px;letter-spacing:0.194px;color:#0b6cd0;">Website subscription</div>
<div class="t" style="left:1333.04px;top:688px;font-size:21.2px;letter-spacing:0.001px;color:#6b6966;">Status:</div>
<div class="t" style="left:1478.79px;top:689px;font-size:21.5px;letter-spacing:0.217px;color:#3a3a38;">Expired</div>
<div class="t" style="left:1332.96px;top:718px;font-size:21.2px;letter-spacing:0.396px;color:#6b6966;">Expiration:</div>
<div class="t" style="left:1478.21px;top:719px;font-size:21.5px;letter-spacing:0.532px;color:#3a3a38;">13 Apr, 2018</div>
<div class="t" style="left:1332.96px;top:748px;font-size:21.2px;letter-spacing:0.472px;color:#6b6966;">Description:</div>
<div class="t" style="left:1478.24px;top:749px;font-size:21.5px;letter-spacing:0.533px;color:#3a3a38;">elements.cloud/newsletter/signup</div>
<div class="t" style="left:1333.06px;top:778px;font-size:21.2px;letter-spacing:0.055px;color:#6b6966;">User:</div>
<div class="t" style="left:1477.17px;top:779px;font-size:21.5px;letter-spacing:0.403px;color:#3a3a38;">Ian Gotts</div>
<div style="position:absolute;left:1254px;top:856px;width:574px;height:218px;border:2px solid #dcdad8;box-sizing:border-box;border-radius:7px"></div>
<svg style="position:absolute;left:1276px;top:890px" width="38" height="38" viewBox="0 0 38 38"><rect width="38" height="38" rx="5.5" fill="#bf3a3c"/><circle cx="19" cy="19" r="9.8" stroke="#fff" stroke-width="3" fill="none"/><rect x="13" y="17" width="12" height="3.7" fill="#fff"/></svg>
<div style="position:absolute;left:1788px;top:890px;width:32px;height:32px;border:2px solid #dcdad8;box-sizing:border-box;border-radius:7px"></div>
<svg style="position:absolute;left:1797px;top:901px" width="14" height="10" viewBox="0 0 14 10"><path d="M0 0.2 L14 0.2 L7 9.5 Z" fill="#706e6b"/></svg>
<div class="t" style="left:1333.96px;top:895px;font-size:21.5px;letter-spacing:0.194px;color:#0b6cd0;">Website subscription</div>
<div class="t" style="left:1333.04px;top:926px;font-size:21.2px;letter-spacing:0.001px;color:#6b6966;">Status:</div>
<div class="t" style="left:1478.79px;top:927px;font-size:21.5px;letter-spacing:0.217px;color:#3a3a38;">Expired</div>
<div class="t" style="left:1332.96px;top:956px;font-size:21.2px;letter-spacing:0.396px;color:#6b6966;">Expiration:</div>
<div class="t" style="left:1478.21px;top:957px;font-size:21.5px;letter-spacing:0.532px;color:#3a3a38;">13 Apr, 2018</div>
<div class="t" style="left:1332.26px;top:986px;font-size:21.2px;letter-spacing:0.568px;color:#6b6966;">Description:</div>
<div class="t" style="left:1478.59px;top:987px;font-size:21.5px;letter-spacing:0.533px;color:#3a3a38;">elements.cloud/newsletter/signup</div>
<div class="t" style="left:1332.36px;top:1016px;font-size:21.2px;letter-spacing:0.230px;color:#6b6966;">User:</div>
<div class="t" style="left:1477.52px;top:1017px;font-size:21.5px;letter-spacing:0.490px;color:#3a3a38;">Ian Gotts</div>
</body></html>
